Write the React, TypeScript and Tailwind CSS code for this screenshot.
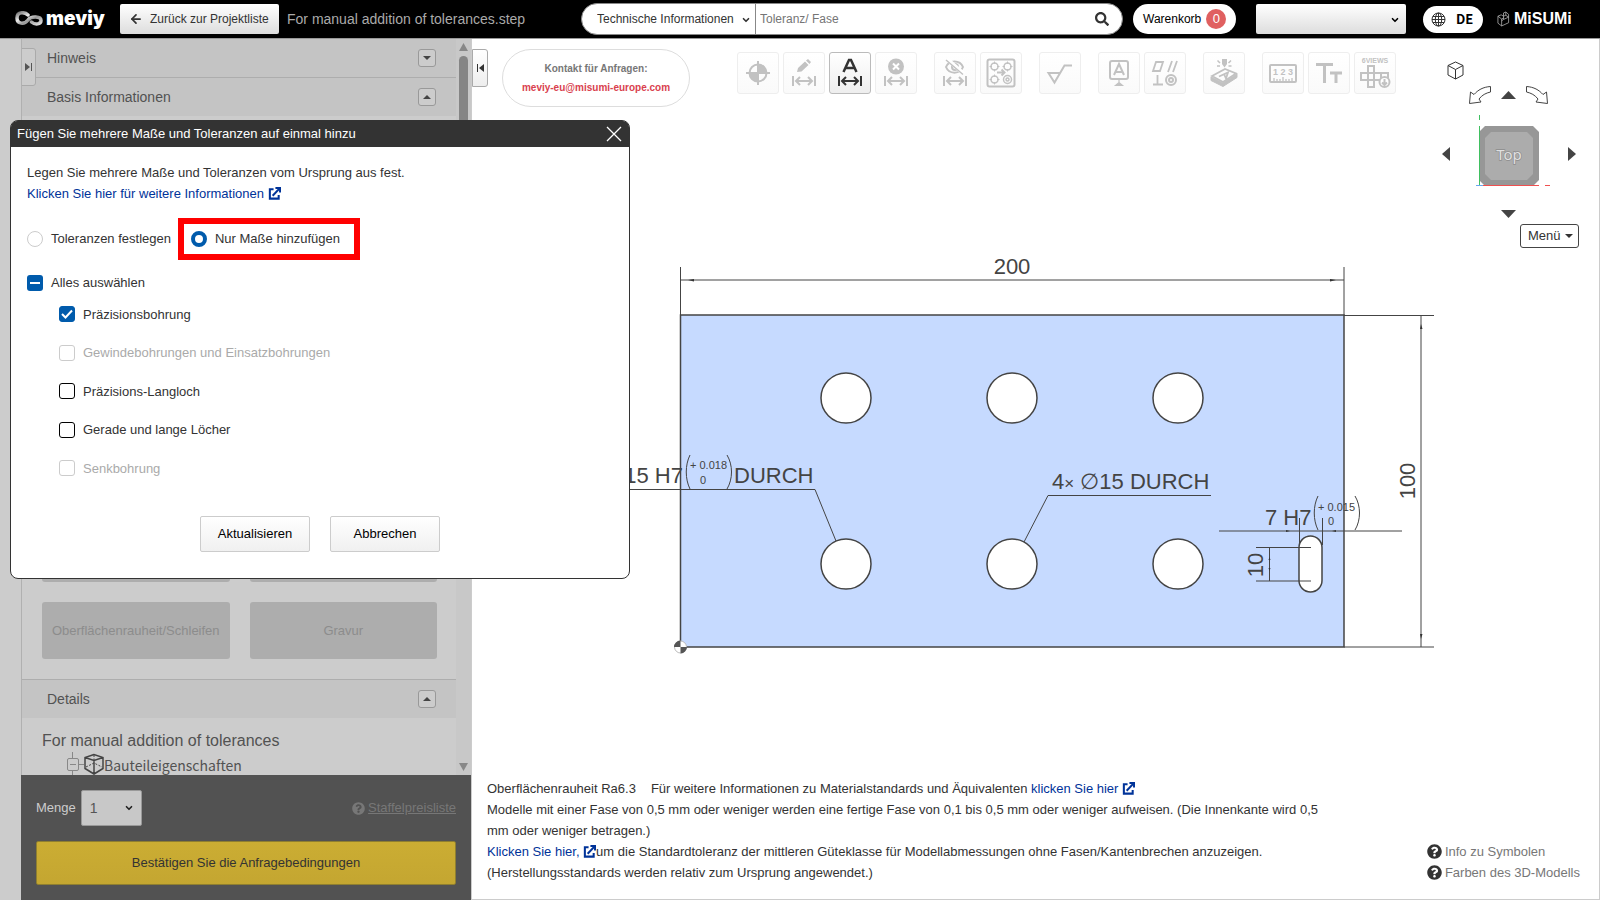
import type { ReactNode } from "react";
import { ArrowLeft, ChevronDown } from "lucide-react";
import { FaQuestionCircle, FaSearch } from "react-icons/fa";

interface ToolButtonProps {
  label: string;
  active?: boolean;
  children: ReactNode;
}

interface HoleOption {
  id: string;
  label: string;
  checked?: boolean;
  disabled?: boolean;
}

const holeOptions: HoleOption[] = [
  { id: "precision", label: "Präzisionsbohrung", checked: true },
  { id: "tapped", label: "Gewindebohrungen und Einsatzbohrungen", disabled: true },
  { id: "slot", label: "Präzisions-Langloch" },
  { id: "straight", label: "Gerade und lange Löcher" },
  { id: "counterbore", label: "Senkbohrung", disabled: true },
];

const holes = [
  [846, 398],
  [1012, 398],
  [1178, 398],
  [846, 564],
  [1012, 564],
  [1178, 564],
];

function ExternalIcon() {
  return (
    <svg viewBox="0 0 14 14" className="inline size-[13px] align-[-2px]" fill="none" stroke="currentColor" strokeWidth="2.200">
      <path d="M6 2.500H2V12.500H11.500V8.500" />
      <path d="M5 9.500L12 2" />
      <path d="M8 1H13V6" />
    </svg>
  );
}

function Logo() {
  return (
    <a href="#" className="flex w-[91px] items-center gap-[3px] text-white" aria-label="meviy">
      <svg viewBox="0 0 28 16" className="h-4 w-7 shrink-0">
        <defs>
          <linearGradient id="loop" x1="0" x2="1" y1="0" y2="1">
            <stop offset="0" stopColor="#777" />
            <stop offset="0.35" stopColor="#eee" />
            <stop offset="0.6" stopColor="#999" />
            <stop offset="1" stopColor="#ddd" />
          </linearGradient>
        </defs>
        <path
          d="M13 4C10 1 2 0 2 7c0 6 7 7 11 2 3-4 13-4 13 .5 0 4-6 4.500-9.500 1.500"
          fill="none"
          stroke="url(#loop)"
          strokeWidth="3.500"
          strokeLinecap="round"
        />
      </svg>
      <span className="font-['Inter'] text-[19px] leading-6 font-black">meviy</span>
    </a>
  );
}

function Header() {
  return (
    <header className="flex h-[39px] shrink-0 items-center border-b border-[#999] bg-black pr-[29px] pl-[15px]">
      <Logo />
      <button className="ml-[14px] flex h-[30px] w-[159px] shrink-0 items-center rounded-[2px] bg-linear-to-b from-white to-[#ddd] pl-[9px] text-[12px] text-[#333]">
        <ArrowLeft size={14} strokeWidth={3} className="mr-[7px]" />
        Zurück zur Projektliste
      </button>
      <h1 className="ml-2 min-w-0 flex-1 truncate text-sm text-[#aaa]">For manual addition of tolerances.step</h1>
      <form className="flex h-8 w-[542px] shrink-0 items-center rounded-full border border-[#888] bg-white text-[12px]">
        <div className="relative h-full w-[174px] border-r border-[#888]">
          <select aria-label="Suchbereich" className="h-full w-full appearance-none pl-[15px] text-[#333] outline-none">
            <option>Technische Informationen</option>
          </select>
          <ChevronDown size={10} strokeWidth={4} className="pointer-events-none absolute top-[11px] right-[4px] text-[#333]" />
        </div>
        <input
          aria-label="Suche"
          placeholder="Toleranz/ Fase"
          className="h-full min-w-0 flex-1 px-1 outline-none placeholder:text-[#757575]"
        />
        <button type="button" aria-label="Suchen" className="mr-[13px] text-[#333]">
          <FaSearch size={14} />
        </button>
      </form>
      <button className="ml-[10px] flex h-[30px] w-[103px] shrink-0 items-center gap-[5px] rounded-full bg-white pl-[10px] text-[12px] text-black">
        Warenkorb
        <span className="grid size-5 place-items-center rounded-full bg-[#e06060] text-[13px] text-white">0</span>
      </button>
      <div className="relative ml-5 h-[30px] w-[150px] shrink-0">
        <select
          aria-label="Konto"
          className="h-full w-full appearance-none rounded-[2px] bg-linear-to-b from-white to-[#ddd] outline-none"
        />
        <ChevronDown size={10} strokeWidth={4} className="pointer-events-none absolute top-[11px] right-[6px] text-black" />
      </div>
      <button className="ml-[17px] flex h-[27px] w-[60px] shrink-0 items-center gap-[10px] rounded-full bg-white pl-2 font-['Noto_Sans_CJK_JP',sans-serif] text-[13px] font-bold text-black">
        <svg viewBox="0 0 15 15" className="size-[15px]" fill="none" stroke="#333">
          <circle cx="7.500" cy="7.500" r="6.500" />
          <ellipse cx="7.500" cy="7.500" rx="3.200" ry="6.500" />
          <path d="M7.500 1V14M1 7.500H14M2 4.500H13M2 10.500H13" />
        </svg>
        DE
      </button>
      <a href="#" aria-label="MiSUMi" className="ml-[14px] flex w-[74px] shrink-0 items-center gap-1 text-white">
        <svg viewBox="0 0 14 16" className="h-4 w-[13px] shrink-0" fill="none" stroke="#bbb" strokeWidth="0.8">
          <path d="M1 5L4.500 3.500L7 5V8.500L12.500 6V12L5 15.500L1 12.500ZM1 5L5 8V15.500M5 8L7 7M7 5V1.500L9.500 0.500L12.500 3V6M7 8.500L5 10M9.500 0.500V4L7 5M9.500 4L12.500 6" />
        </svg>
        <span className="text-base leading-5 font-bold">MiSUMi</span>
      </a>
    </header>
  );
}

function SectionHeader({ title, open }: { title: string; open?: boolean }) {
  return (
    <div className="flex h-[38px] items-center justify-between bg-[#c4c4c4] pr-5 pl-[25px] text-sm text-[#525252]">
      <h2>{title}</h2>
      <button
        aria-label={title}
        className="grid size-[18px] place-items-center rounded-[3px] border border-[#999] bg-[#ccc] text-[#444]"
      >
        <svg viewBox="0 0 8 4" className="h-1 w-2" fill="currentColor">
          <path d={open ? "M0 4L4 0L8 4Z" : "M0 0L4 4L8 0Z"} />
        </svg>
      </button>
    </div>
  );
}

function Sidebar() {
  const actionClass = "h-[57px] rounded-[3px] bg-[#adadad] text-[13px] text-[#8c8c8c]";
  return (
    <aside className="flex w-[472px] shrink-0 flex-col bg-[#ccc] pr-px pl-[21px]">
      <div className="flex min-h-0 flex-1 border-l border-[#b0b0b0]">
        <div className="relative min-w-0 flex-1 overflow-hidden">
          <button
            aria-label="Bereich ausklappen"
            className="absolute top-[9px] -left-px grid h-[38px] w-[15px] place-items-center rounded-r-[3px] border border-[#aaa] bg-[#ccc] text-[#555]"
          >
            <svg viewBox="0 0 8 8" className="size-2" fill="currentColor">
              <path d="M0 0L5 4L0 8ZM6 0H7V8H6Z" />
            </svg>
          </button>
          <SectionHeader title="Hinweis" />
          <div className="border-t border-[#adadad]">
            <SectionHeader title="Basis Informationen" open />
          </div>
          <div className="grid grid-cols-2 gap-5 pt-[409px] pr-[19px] pb-5 pl-5">
            <button disabled aria-label="Bohrung" className={actionClass} />
            <button disabled aria-label="Toleranz" className={actionClass} />
            <button disabled className={actionClass}>
              Oberflächenrauheit/Schleifen
            </button>
            <button disabled className={actionClass}>
              Gravur
            </button>
          </div>
          <div className="border-t border-[#adadad]">
            <SectionHeader title="Details" open />
          </div>
          <p className="mt-[13px] pl-5 text-base leading-5 text-[#525252]">For manual addition of tolerances</p>
          <div className="flex h-7 items-center pl-[45px] text-[#525252]">
            <svg viewBox="0 0 37 26" className="h-[26px] w-[37px]" fill="none" stroke="#888">
              <path d="M5.500 0V6M5.500 19V26M12 12.500H17" />
              <rect x="0.500" y="6.500" width="11" height="12" rx="1.500" />
              <path d="M3 12.500H9" />
              <path
                d="M27 2.500L18 5.500V16.500L27 22L36 16.500V5.500ZM18 5.500L27 8.500L36 5.500M27 8.500V22"
                stroke="#444"
                strokeWidth="1.500"
              />
              <path d="M19 15L27 11L35 15M27 3V8" stroke="#444" strokeDasharray="2 1.500" />
            </svg>
            <span className="font-['Noto_Sans_CJK_JP',sans-serif] text-[14px]">Bauteileigenschaften</span>
          </div>
        </div>
        <div className="flex w-[15px] flex-col items-center bg-[#c8c8c8] pt-1 pb-1 text-[#888]">
          <svg viewBox="0 0 9 8" className="h-2 w-[9px]" fill="currentColor">
            <path d="M4.500 0L9 8H0Z" />
          </svg>
          <div className="mt-[5px] h-[480px] w-[9px] rounded-full bg-[#858585]" />
          <svg viewBox="0 0 9 8" className="mt-auto h-2 w-[9px]" fill="currentColor">
            <path d="M0 0H9L4.500 8Z" />
          </svg>
        </div>
      </div>
      <div className="h-[125px] shrink-0 bg-[#525252] px-[15px] pt-[15px]">
        <div className="flex h-9 items-center">
          <label htmlFor="menge" className="text-[13px] text-[#ccc]">
            Menge
          </label>
          <div className="relative ml-[5px] h-9 w-[61px]">
            <select
              id="menge"
              className="h-full w-full appearance-none rounded-[2px] border border-[#999] bg-[#c8c8c8] pl-2 text-sm text-[#555] outline-none"
            >
              <option>1</option>
            </select>
            <ChevronDown size={10} strokeWidth={4} className="pointer-events-none absolute top-[13px] right-2 text-[#222]" />
          </div>
          <a href="#" className="ml-auto flex items-center gap-[3px] text-[13px] text-[#777]">
            <FaQuestionCircle size={13} />
            <span className="underline">Staffelpreisliste</span>
          </a>
        </div>
        <button className="mt-[15px] h-11 w-full rounded-[2px] border border-[#8f7f30] bg-linear-to-b from-[#cbad33] to-[#c4a631] text-[13px] text-[#333]">
          Bestätigen Sie die Anfragebedingungen
        </button>
      </div>
    </aside>
  );
}

function ToolButton({ label, active, children }: ToolButtonProps) {
  return (
    <button
      aria-label={label}
      className={
        active
          ? "size-[42px] rounded-[3px] border border-[#bbb] bg-linear-to-b from-white to-[#eee] text-[#333]"
          : "size-[42px] rounded-[3px] border border-[#eee] bg-linear-to-b from-white to-[#fafafa] text-[#c2c2c2]"
      }
    >
      <svg viewBox="1 1 40 40" className="size-10" fill="none" stroke="currentColor" strokeWidth="2">
        {children}
      </svg>
    </button>
  );
}

function DimensionArrow() {
  return <path d="M10 24V34M32 24V34M13 29H29M17 25L13 29L17 33M25 25L29 29L25 33" />;
}

function Toolbar() {
  return (
    <div className="mt-[3px] flex gap-[17px]">
      <div className="flex gap-1">
        <ToolButton label="Ursprung">
          <circle cx="21" cy="21" r="8.500" />
          <path d="M21 9V33M9 21H33" />
          <path d="M21 21V29.500A8.500 8.500 0 0 1 12.500 21ZM21 21V12.500A8.500 8.500 0 0 1 29.500 21Z" fill="currentColor" stroke="none" />
        </ToolButton>
        <ToolButton label="Maß bearbeiten">
          <path d="M14 20L15 16L22 9.500L25.500 13L18.500 19.500ZM23 8.500L25 7L28 10L26.500 12Z" fill="currentColor" stroke="none" />
          <DimensionArrow />
        </ToolButton>
        <ToolButton label="Maße automatisch hinzufügen" active>
          <path d="M14.500 20L20 8H22L27.500 20M17 16H25" strokeWidth="2.500" />
          <DimensionArrow />
        </ToolButton>
        <ToolButton label="Maß löschen">
          <circle cx="21" cy="14.500" r="8" fill="currentColor" stroke="none" />
          <path d="M18 11.500L24 17.500M24 11.500L18 17.500" stroke="white" />
          <DimensionArrow />
        </ToolButton>
      </div>
      <div className="flex gap-1">
        <ToolButton label="Maß ausblenden">
          <path d="M12 15C15 7.500 26 7.500 29 15C26 22.500 15 22.500 12 15Z" />
          <circle cx="21" cy="15" r="3" />
          <path d="M13 7L30 22" stroke="white" strokeWidth="4" />
          <path d="M12 8L29 22.500" strokeWidth="1.500" />
          <DimensionArrow />
        </ToolButton>
        <ToolButton label="Bohrungen gruppieren">
          <rect x="7.500" y="7.500" width="27" height="27" rx="2" />
          <g strokeWidth="1.500">
            <circle cx="14.500" cy="14.500" r="3.500" />
            <circle cx="27.500" cy="14.500" r="3.500" />
            <circle cx="14.500" cy="27.500" r="3.500" />
            <circle cx="27.500" cy="27.500" r="4" />
            <circle cx="27.500" cy="27.500" r="1.500" />
            <path d="M14.500 9.500V12M14.500 17V19.500M9.500 14.500H12M17 14.500H19.500M27.500 9.500V12M27.500 17V19.500M22.500 14.500H25M30 14.500H32.500M14.500 22.500V25M14.500 30V32.500M9.500 27.500H12M17 27.500H19.500" strokeWidth="1" />
            <path d="M17 20.500H24M21.500 17.500L24.500 20.500L21.500 23.500" strokeWidth="2" />
          </g>
        </ToolButton>
      </div>
      <ToolButton label="Oberflächenrauheit">
        <path d="M21 21H9.500L15.500 30.500L25.500 13.500H33" />
      </ToolButton>
      <div className="flex gap-1">
        <ToolButton label="Bezug">
          <rect x="12" y="9" width="18" height="18" rx="2" />
          <path d="M16 23L21 12L26 23M18 20H24" />
          <path d="M21 27V31M17.500 33.500L21 30.500L24.500 33.500Z" fill="currentColor" strokeWidth="1.200" />
        </ToolButton>
        <ToolButton label="Form- und Lagetoleranz">
          <path d="M12 10H19L16 19H9ZM28 9L24 20M33 9L29 20M13.500 23V32M9 32.500H19" strokeWidth="1.800" />
          <circle cx="27" cy="28" r="5" />
          <circle cx="27" cy="28" r="2" />
        </ToolButton>
      </div>
      <ToolButton label="Gravur">
        <path d="M8 25V28.500L20 34.500L34 25.500V22L20 31Z" fill="currentColor" strokeWidth="1" />
        <path d="M9 24L22 17L33 21.500L20 30ZM16 24.500L25 20.500L23 26.500L21 22" strokeWidth="1.800" />
        <path d="M14.500 8.500L17 11M14 14H17M28 8.500L25.500 11M28.500 14H25.500" strokeWidth="1.500" />
        <path d="M19 7H24V12L21.500 15.500L19 12Z" fill="currentColor" stroke="none" />
      </ToolButton>
      <div className="flex gap-1">
        <ToolButton label="Maßstab">
          <rect x="8" y="13" width="26" height="17" rx="1" />
          <text x="21" y="23" textAnchor="middle" fill="currentColor" stroke="none" className="text-[9px] font-bold">
            1 2 3
          </text>
          <path d="M12 29V26M15 29V27M18 29V27M21 29V25M24 29V27M27 29V27M30 29V26" strokeWidth="1.300" />
        </ToolButton>
        <ToolButton label="Textgröße">
          <path d="M8 12.500H25M16.500 12V31M22 21H34M28 21V31" strokeWidth="3" />
        </ToolButton>
        <ToolButton label="6 Ansichten">
          <text x="21" y="11" textAnchor="middle" fill="currentColor" stroke="none" className="text-[7px] font-bold">
            6VIEWS
          </text>
          <path d="M14 14H20V21H34V28H20V35H14V28H7V21H14ZM14 21H20V28H14ZM27 21V28" />
          <circle cx="30.500" cy="30" r="5" fill="white" />
          <path d="M30.500 27V33M28 30.500L30.500 33L33 30.500" />
        </ToolButton>
      </div>
    </div>
  );
}

function Triangle({ label, d, wide }: { label: string; d: string; wide?: boolean }) {
  return (
    <button aria-label={label} className={wide ? "block h-2 w-[15px]" : "block h-[14px] w-2"}>
      <svg viewBox={wide ? "0 0 15 8" : "0 0 8 14"} className="block h-full w-full" fill="#444">
        <path d={d} />
      </svg>
    </button>
  );
}

function ViewControls() {
  return (
    <div className="absolute top-[22px] right-5 w-[137px]">
      <div className="w-[134px]">
        <button aria-label="Isometrische Ansicht" className="ml-[5px] block">
          <svg viewBox="0 0 17 19" className="block h-[19px] w-[17px]" fill="none" stroke="#333">
            <path d="M8.500 1L1 4.500V14L8.500 18L16 14V4.500ZM1 4.500L8.500 8.500L16 4.500M8.500 8.500V18" />
          </svg>
        </button>
        <div className="mt-[6px] flex h-[18px] items-center justify-center gap-[10px] pr-[2px]">
          <button aria-label="Nach links drehen">
            <svg viewBox="0 0 22 18" className="block h-[18px] w-[22px]" fill="none" stroke="#444">
              <path d="M21.500 0.500V6C17 7 13 9 10 13L12 16L0.500 17.500L1.500 6L5 8.500C9 4 14 1 21.500 0.500Z" />
            </svg>
          </button>
          <Triangle label="Nach oben" d="M0 8L7.500 0L15 8Z" wide />
          <button aria-label="Nach rechts drehen">
            <svg viewBox="0 0 22 18" className="block h-[18px] w-[22px]" fill="none" stroke="#444">
              <path d="M0.500 0.500V6C5 7 9 9 12 13L10 16L21.500 17.500L20.500 6L17 8.500C13 4 8 1 0.500 0.500Z" />
            </svg>
          </button>
        </div>
        <div className="mt-[10px] flex items-center justify-between">
          <Triangle label="Nach links" d="M8 0V14L0 7Z" />
          <svg viewBox="1466 114 86 80" className="h-20 w-[86px]">
            <path d="M1485 126H1533L1539 132V180L1533 186H1485L1479 180V132Z" fill="#979797" />
            <path d="M1491 132H1527L1533 138V174L1527 180H1491L1485 174V138Z" fill="#acacac" />
            <path d="M1479.500 115V120M1479.500 126V185" stroke="#3fc060" />
            <path d="M1483 185.500H1539M1545 185.500H1550" stroke="#f05050" />
            <path d="M1476 185.500H1483" stroke="#6aa8f0" />
            <text x="1509" y="160" textAnchor="middle" fill="#e0e0e0" stroke="#8c8c8c" strokeWidth="1.500" paintOrder="stroke" className="font-['Noto_Sans'] text-[15px]">
              Top
            </text>
          </svg>
          <Triangle label="Nach rechts" d="M0 0V14L8 7Z" />
        </div>
        <div className="mt-4 flex justify-center pr-[2px]">
          <Triangle label="Nach unten" d="M0 0H15L7.500 8Z" wide />
        </div>
      </div>
      <button className="mt-[6px] ml-auto flex h-6 w-[59px] items-center justify-between rounded-[3px] border border-[#444] bg-white pr-[5px] pl-[7px] text-[13px] text-[#333]">
        Menü
        <svg viewBox="0 0 8 4" className="h-1 w-2" fill="#333">
          <path d="M0 0H8L4 4Z" />
        </svg>
      </button>
    </div>
  );
}

function Drawing() {
  return (
    <svg
      viewBox="600 255 840 405"
      className="mt-[148px] ml-32 h-[405px] w-[840px] shrink-0 overflow-visible"
      fill="none"
      stroke="#444"
    >
      <rect x="680.500" y="315" width="663.500" height="332" fill="#c6daff" strokeWidth="1.500" />
      {holes.map(([cx, cy]) => (
        <circle key={`${cx}-${cy}`} cx={cx} cy={cy} r="25" fill="white" strokeWidth="1.500" />
      ))}
      <rect x="1299" y="536" width="23" height="56" rx="11.500" fill="white" strokeWidth="1.500" />
      <path d="M680.500 267V315M1344 267V315M681 280H1344" />
      <path d="M1344 315.500H1434M1344 647H1434M1421 316V647" />
      <path d="M600 489.500H815L836 541M1211 495.500H1048L1024 542" />
      <path d="M1219 531H1402M1299.500 518V545M1322.500 518V545" />
      <path d="M1256 547.500H1311M1256 581H1311M1269.500 547V581" />
      <path
        d="M688 280L694 279V281.500ZM1336 280L1330 279V281.500ZM1421 324L1420 329H1422.500ZM1421 639L1420 634H1422.500ZM1290 531L1286 530V532ZM1332 531L1336 530V532ZM1269.500 557L1268.500 560H1270.500ZM1269.500 571L1268.500 568H1270.500Z"
        fill="#333"
        stroke="none"
      />
      <path d="M690 455C685 465 685 479 690 489M727 455C733 465 733 479 727 489M1318 496C1313 506 1313 520 1318 530M1355 496C1361 506 1361 520 1355 530" />
      <circle cx="680.500" cy="647" r="6" fill="white" stroke="#bbb" />
      <path d="M680.500 647V640.500A6.500 6.500 0 0 0 674 647ZM680.500 647V653.500A6.500 6.500 0 0 0 687 647Z" fill="#555" stroke="none" />
      <g fill="#444" stroke="none" className="text-[22px]">
        <text x="1012" y="274" textAnchor="middle">200</text>
        <text x="683" y="483" textAnchor="end">15 H7</text>
        <text x="734" y="483">DURCH</text>
        <text x="1052" y="489">
          4<tspan className="text-[17px]">×</tspan> ∅15 DURCH
        </text>
        <text x="1265" y="525">7 H7</text>
        <text transform="translate(1415 481) rotate(-90)" textAnchor="middle">100</text>
        <text transform="translate(1263 565) rotate(-90)" textAnchor="middle">10</text>
      </g>
      <g fill="#444" stroke="none" className="text-[11px]">
        <text x="690" y="469">+ 0.018</text>
        <text x="700" y="484">0</text>
        <text x="1318" y="511">+ 0.015</text>
        <text x="1328" y="525">0</text>
      </g>
    </svg>
  );
}

function Notes() {
  return (
    <footer className="mt-auto flex items-end justify-between pr-[19px] pb-4 pl-[15px] text-[13px] leading-[21px] text-[#333]">
      <div className="max-w-[840px]">
        <p>
          <span className="mr-[15px]">Oberflächenrauheit Ra6.3</span>
          Für weitere Informationen zu Materialstandards und Äquivalenten{" "}
          <a href="#" className="text-[#003399]">
            klicken Sie hier <ExternalIcon />
          </a>
        </p>
        <p>
          Modelle mit einer Fase von 0,5 mm oder weniger werden eine fertige Fase von 0,1 bis 0,5 mm oder weniger
          aufweisen. (Die Innenkante wird 0,5 mm oder weniger betragen.)
        </p>
        <p>
          <a href="#" className="text-[#003399]">
            Klicken Sie hier, <ExternalIcon />
          </a>
          um die Standardtoleranz der mittleren Güteklasse für Modellabmessungen ohne Fasen/Kantenbrechen anzuzeigen.
        </p>
        <p>(Herstellungsstandards werden relativ zum Ursprung angewendet.)</p>
      </div>
      <div className="text-[#777]">
        <a href="#" className="flex items-center gap-[3px]">
          <FaQuestionCircle size={15} className="text-[#333]" />
          Info zu Symbolen
        </a>
        <a href="#" className="flex items-center gap-[3px]">
          <FaQuestionCircle size={15} className="text-[#333]" />
          Farben des 3D-Modells
        </a>
      </div>
    </footer>
  );
}

function Viewer() {
  return (
    <main className="relative flex min-w-0 flex-1 flex-col overflow-hidden border-r border-b border-[#ccc] bg-white">
      <div className="flex items-start pt-[10px]">
        <button
          aria-label="Bereich einklappen"
          className="grid h-[38px] w-4 place-items-center rounded-r-[3px] border border-[#aaa] bg-linear-to-b from-white to-[#eee] text-[#333]"
        >
          <svg viewBox="0 0 8 8" className="size-2" fill="currentColor">
            <path d="M8 0L3 4L8 8ZM1 0H2V8H1Z" />
          </svg>
        </button>
        <div className="mr-[47px] ml-[14px] flex h-[58px] w-[188px] flex-col items-center justify-center rounded-full border border-[#ddd] text-[10px] leading-[19px] font-bold text-[#777]">
          <span>Kontakt für Anfragen:</span>
          <a href="#" className="text-[#d9414e]">
            meviy-eu@misumi-europe.com
          </a>
        </div>
        <Toolbar />
      </div>
      <ViewControls />
      <Drawing />
      <Notes />
    </main>
  );
}

function OptionCheckbox({ option }: { option: HoleOption }) {
  return (
    <label
      htmlFor={option.id}
      className={option.disabled ? "flex items-center gap-2 text-[#aaa]" : "flex items-center gap-2 text-[#333]"}
    >
      <span className="relative size-4">
        <input
          id={option.id}
          type="checkbox"
          defaultChecked={option.checked}
          disabled={option.disabled}
          className="peer block size-4 appearance-none rounded-[3px] border border-black bg-white checked:border-[#005bac] checked:bg-[#005bac] disabled:border-[#ccc]"
        />
        <svg
          viewBox="0 0 16 16"
          className="pointer-events-none absolute inset-0 hidden size-4 peer-checked:block"
          fill="none"
          stroke="white"
          strokeWidth="2"
        >
          <path d="M3 8L6.500 11.500L13 4.500" />
        </svg>
      </span>
      {option.label}
    </label>
  );
}

function ToleranceDialog() {
  const buttonClass =
    "h-9 w-[110px] rounded-[2px] border border-[#ccc] bg-linear-to-b from-white to-[#f0f0f0] text-black";
  return (
    <div
      role="dialog"
      aria-labelledby="dialog-title"
      className="absolute top-[120px] left-[10px] w-[620px] rounded-lg border border-[#333] bg-white pb-[26px] text-[13px] text-[#333]"
    >
      <div className="flex h-[26px] items-center justify-between rounded-t-[6px] bg-[#333] pr-[7px] pl-[6px] text-white">
        <h2 id="dialog-title">Fügen Sie mehrere Maße und Toleranzen auf einmal hinzu</h2>
        <button aria-label="Schließen">
          <svg viewBox="0 0 16 16" className="block size-4" stroke="white" strokeWidth="1.300">
            <path d="M1 1L15 15M15 1L1 15" />
          </svg>
        </button>
      </div>
      <div className="px-4 pt-[15px]">
        <p className="leading-[21px]">Legen Sie mehrere Maße und Toleranzen vom Ursprung aus fest.</p>
        <a href="#" className="block leading-[21px] text-[#003399]">
          Klicken Sie hier für weitere Informationen <ExternalIcon />
        </a>
        <div className="mt-[14px] flex items-center gap-[7px]">
          <label className="flex items-center gap-2">
            <input type="radio" name="mode" className="size-4 appearance-none rounded-full border border-[#ccc]" />
            Toleranzen festlegen
          </label>
          <label className="flex h-[42px] w-[182px] items-center gap-2 border-6 border-[#f00] pl-[7px]">
            <input
              type="radio"
              name="mode"
              defaultChecked
              className="size-4 appearance-none rounded-full border-4 border-[#005bac] bg-white"
            />
            Nur Maße hinzufügen
          </label>
        </div>
        <label htmlFor="select-all" className="mt-[13px] flex items-center gap-2">
          <span className="relative size-4">
            <input id="select-all" type="checkbox" className="block size-4 appearance-none rounded-[3px] bg-[#005bac]" />
            <svg viewBox="0 0 16 16" className="pointer-events-none absolute inset-0 size-4" stroke="white" strokeWidth="2">
              <path d="M3 8H13" />
            </svg>
          </span>
          Alles auswählen
        </label>
        <div className="mt-3 flex flex-col gap-[19px] pl-8">
          {holeOptions.map((option) => (
            <OptionCheckbox key={option.id} option={option} />
          ))}
        </div>
        <div className="mt-[38px] flex justify-center gap-5">
          <button className={buttonClass}>Aktualisieren</button>
          <button className={buttonClass}>Abbrechen</button>
        </div>
      </div>
    </div>
  );
}

export default function App() {
  return (
    <div className="relative flex h-screen flex-col overflow-hidden bg-white font-['Liberation_Sans',Arial,sans-serif]">
      <Header />
      <div className="flex min-h-0 flex-1">
        <Sidebar />
        <Viewer />
      </div>
      <ToleranceDialog />
    </div>
  );
}
